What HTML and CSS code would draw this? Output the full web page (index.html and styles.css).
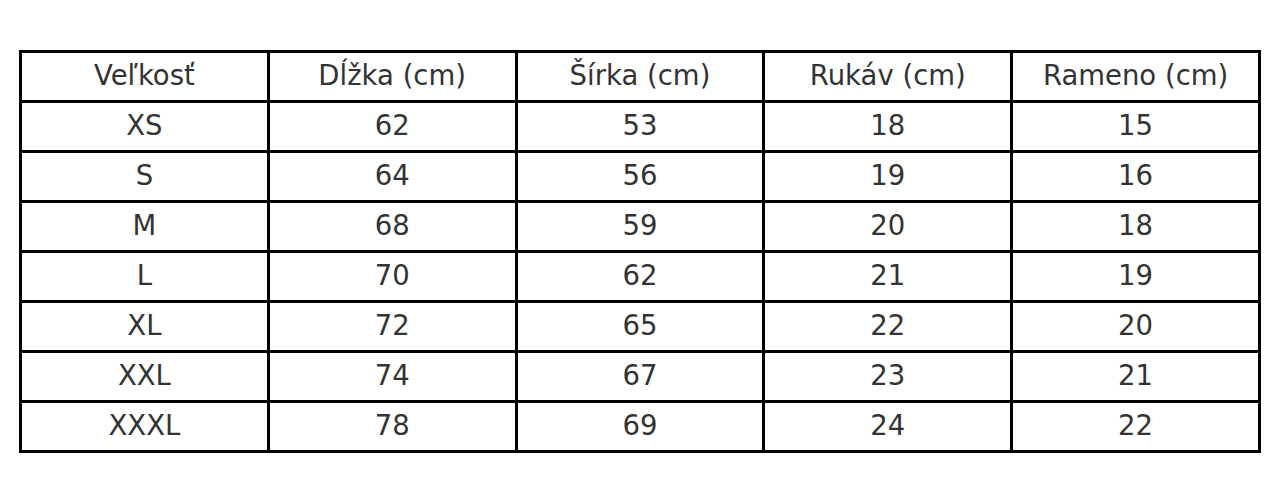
FILE: index.html
```html
<!DOCTYPE html>
<html lang="sk">
<head>
<meta charset="utf-8">
<link rel="stylesheet" href="styles.css">
</head>
<body>
<div class="wrap">
<table class="sizes">
<thead>
<tr><th>Veľkosť</th><th>Dĺžka (cm)</th><th>Šírka (cm)</th><th>Rukáv (cm)</th><th>Rameno (cm)</th></tr>
</thead>
<tbody>
<tr><td>XS</td><td>62</td><td>53</td><td>18</td><td>15</td></tr>
<tr><td>S</td><td>64</td><td>56</td><td>19</td><td>16</td></tr>
<tr><td>M</td><td>68</td><td>59</td><td>20</td><td>18</td></tr>
<tr><td>L</td><td>70</td><td>62</td><td>21</td><td>19</td></tr>
<tr><td>XL</td><td>72</td><td>65</td><td>22</td><td>20</td></tr>
<tr><td>XXL</td><td>74</td><td>67</td><td>23</td><td>21</td></tr>
<tr><td>XXXL</td><td>78</td><td>69</td><td>24</td><td>22</td></tr>
</tbody>
</table>
</div>
</body>
</html>
```

FILE: styles.css
```css
html, body {
  margin: 0;
  padding: 0;
  background: #ffffff;
}
.wrap {
  padding: 50px 19px 0 19px;
}
.sizes {
  width: 1242px;
  border-collapse: collapse;
  table-layout: fixed;
  font-family: "DejaVu Sans", sans-serif;
  font-size: 27.5px;
  color: #333333;
}
.sizes th, .sizes td {
  border: 3px solid #000000;
  height: 43px;
  padding: 0 0 4px 0;
  text-align: center;
  vertical-align: middle;
  font-weight: normal;
}
```
